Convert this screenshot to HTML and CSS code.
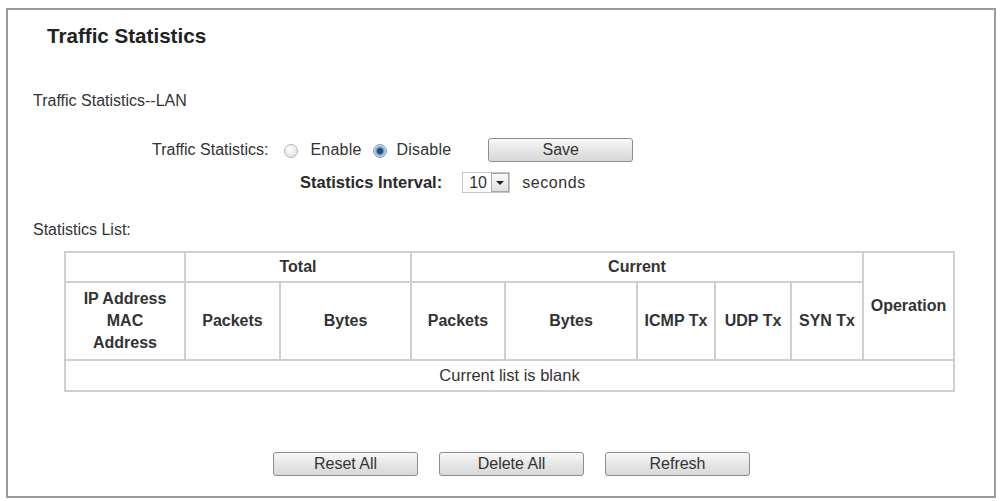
FILE: index.html
```html
<!DOCTYPE html>
<html lang="en">
<head>
    <meta charset="UTF-8">
    <title>Traffic Statistics</title>
    <link rel="stylesheet" href="styles.css">
</head>
<body>
    <div class="frame">
        <h1 class="title">Traffic Statistics</h1>
        <div class="section-label lan">Traffic Statistics--LAN</div>

        <div class="form-row switch-row">
            <span class="field-label">Traffic Statistics:</span>
            <span class="radio"></span>
            <span class="radio-text">Enable</span>
            <span class="radio checked"></span>
            <span class="radio-text">Disable</span>
            <button class="btn save">Save</button>
        </div>
        <div class="form-row interval-row">
            <span class="field-label bold">Statistics Interval:</span>
            <span class="select">
                <span class="select-value">10</span>
                <span class="select-arrow"></span>
            </span>
            <span class="unit">seconds</span>
        </div>

        <div class="section-label list">Statistics List:</div>

        <table class="stats">
            <colgroup>
                <col style="width: 120px">
                <col style="width: 95px">
                <col style="width: 131px">
                <col style="width: 94px">
                <col style="width: 132px">
                <col style="width: 78px">
                <col style="width: 76px">
                <col style="width: 72px">
                <col style="width: 91px">
            </colgroup>
            <tr class="group-row">
                <th></th>
                <th colspan="2">Total</th>
                <th colspan="5">Current</th>
                <th rowspan="2">Operation</th>
            </tr>
            <tr class="head-row">
                <th>IP Address<br>MAC<br>Address</th>
                <th>Packets</th>
                <th>Bytes</th>
                <th>Packets</th>
                <th>Bytes</th>
                <th>ICMP Tx</th>
                <th>UDP Tx</th>
                <th>SYN Tx</th>
            </tr>
            <tr class="empty-row">
                <td colspan="9">Current list is blank</td>
            </tr>
        </table>

        <div class="actions">
            <button class="btn">Reset All</button>
            <button class="btn">Delete All</button>
            <button class="btn">Refresh</button>
        </div>
    </div>
</body>
</html>
```

FILE: styles.css
```css
body {
    margin: 0;
    background: #fff;
    font-family: "Liberation Sans", Arial, sans-serif;
    font-size: 16px;
    color: #333;
}

.frame {
    box-sizing: border-box;
    width: 990px;
    height: 490px;
    margin: 8px 0 0 6px;
    border: 2px solid #9a9a9a;
    background: #fff;
}

.title {
    margin: 14px 0 0 39px;
    font-size: 20.6px;
    line-height: 24px;
    font-weight: bold;
    color: #222;
}

.section-label {
    padding-left: 25px;
    line-height: 20px;
}

.section-label.lan {
    margin-top: 43px;
}

.section-label.list {
    margin-top: 27px;
}

.form-row {
    display: flex;
    align-items: center;
}

.switch-row {
    margin-top: 27px;
    height: 24px;
    padding-left: 144px;
}

.interval-row {
    margin-top: 10px;
    height: 21px;
    padding-left: 292px;
}

.field-label.bold {
    font-size: 16.5px;
    font-weight: bold;
    color: #2a2a2a;
}

.radio {
    box-sizing: border-box;
    width: 14px;
    height: 14px;
    border-radius: 50%;
    border: 1px solid #b8b8b8;
    background: radial-gradient(circle at 40% 35%, #fff, #d8d8d8);
    margin: 2px 12px 0 16px;
}

.radio.checked {
    margin-left: 11px;
    margin-right: 10px;
    border-color: #7f9db9;
    background: radial-gradient(circle, #1c4e86 0 2.5px, #6f93bd 3.5px, #d6e2ef 6px);
}

.radio-text {
    letter-spacing: 0.2px;
}

.btn {
    box-sizing: border-box;
    width: 145px;
    height: 24px;
    padding: 0;
    border: 1px solid #8e8e8e;
    border-radius: 3px;
    background: linear-gradient(#f8f8f8, #e6e6e6 50%, #d8d8d8);
    font-family: "Liberation Sans", Arial, sans-serif;
    font-size: 16px;
    color: #333;
}

.save {
    margin: -1px 0 0 37px;
}

.select {
    display: flex;
    box-sizing: border-box;
    width: 48px;
    height: 21px;
    margin-left: 20px;
    border: 1px solid #c4c4c4;
    background: #fff;
}

.select-value {
    flex: 1;
    line-height: 19px;
    padding-left: 6px;
}

.select-arrow {
    position: relative;
    box-sizing: border-box;
    width: 18px;
    border: 1px solid #a8a8a8;
    background: linear-gradient(#fafafa, #e0e0e0);
}

.select-arrow::after {
    content: '';
    position: absolute;
    left: 4px;
    top: 7px;
    border-left: 4px solid transparent;
    border-right: 4px solid transparent;
    border-top: 4px solid #222;
}

.unit {
    margin-left: 12px;
    letter-spacing: 0.6px;
}

.stats {
    margin: 11px 0 0 56px;
    width: 889px;
    border-collapse: collapse;
    table-layout: fixed;
    border: 2px solid #cfcfcf;
}

.stats th,
.stats td {
    border: 2px solid #cfcfcf;
    padding: 0;
    text-align: center;
    font-size: 16.5px;
    color: #333;
}

.stats th {
    font-size: 16px;
    font-weight: bold;
    line-height: 22px;
}

.group-row {
    height: 30px;
}

.head-row {
    height: 78px;
}

.empty-row {
    height: 31px;
}

.actions {
    display: flex;
    gap: 21px;
    margin-top: 60px;
    padding-left: 265px;
}
```
